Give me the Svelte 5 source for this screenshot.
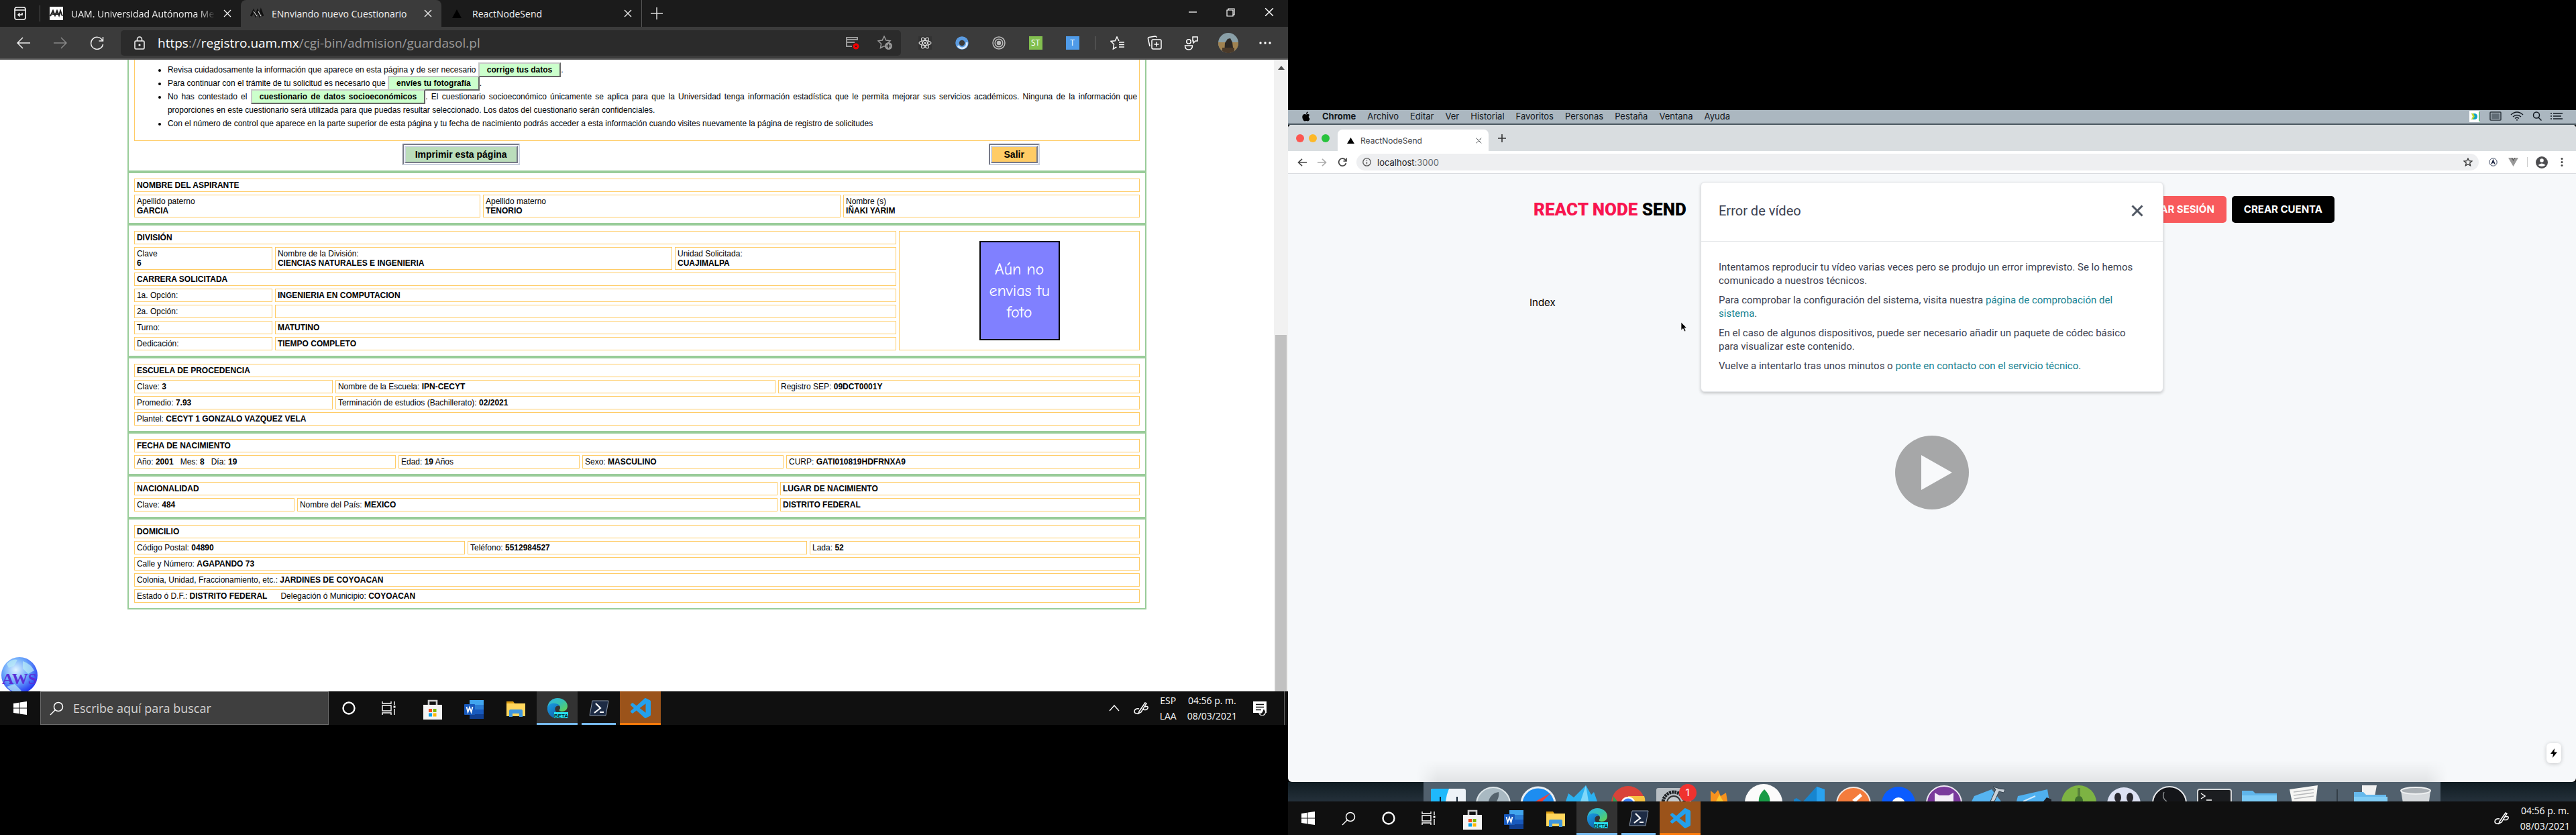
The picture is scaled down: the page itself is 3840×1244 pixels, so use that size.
<script>
  const macMenus = ['Archivo', 'Editar', 'Ver', 'Historial', 'Favoritos', 'Personas', 'Pestaña', 'Ventana', 'Ayuda'];
  const share = (list) => {
    const total = list.reduce((a, b) => a + b, 0);
    return list.map((w) => (w / total) * 100);
  };
  const dockMain = ['finder', 'rocket', 'safari', 'arrows', 'chrome', 'gear', 'fire', 'mongo', 'code', 'postman', 'drop', 'github', 'xcode', 'simulator', 'android', 'skull', 'obs', 'term', 'folder', 'notes'];
  const dockEnd = ['docs', 'trash'];
</script>

{#snippet cols(list)}
  <colgroup>
    {#each share(list) as w}<col style="width: {w}%" />{/each}
  </colgroup>
{/snippet}

{#snippet cross(size)}
  <svg width={size} height={size} viewBox="0 0 12 12" aria-hidden="true"><path d="M1 1 11 11M11 1 1 11" fill="none" stroke="currentColor" stroke-width="1.3" /></svg>
{/snippet}

{#snippet pen()}
  <svg width="24" height="24" viewBox="0 0 24 24" fill="none" stroke="#fff" stroke-width="1.5" aria-hidden="true"><path d="M9 17 18 4l2 1-8 13-4 2zM9 13c-4-1-7 1-7 4s4 4 7 2M15 14c3 1 6 1 7-2s-2-3-4-2" /></svg>
{/snippet}

{#snippet systemButtons()}
  <button class="sys" aria-label="Cortana"><svg width="22" height="22" viewBox="0 0 22 22"><circle cx="11" cy="11" r="8.5" fill="none" stroke="#fff" stroke-width="2.4" /></svg></button>
  <button class="sys" aria-label="Vista de tareas"><svg width="22" height="20" viewBox="0 0 22 20" fill="none" stroke="#fff" stroke-width="1.4"><path d="M1 0v3h13V0M1 20v-3h13v3M1 6h13v8H1zM19 0v5M19 11v9" /><path d="M17.500 6.500h3v3h-3z" fill="#fff" stroke="none" /></svg></button>
{/snippet}

{#snippet apps()}
  <div class="apps">
    <button class="app" aria-label="Microsoft Store">
      <svg width="30" height="30" viewBox="0 0 30 30"><path d="M9 9V2h12v7" fill="none" stroke="#ccc" stroke-width="2.6" /><path d="M1 8h28v22H1z" fill="#f4f4f4" /><path d="M9 14h5v5H9z" fill="#f25022" /><path d="M15.500 14h5v5h-5z" fill="#7fba00" /><path d="M9 20.500h5v5H9z" fill="#00a4ef" /><path d="M15.500 20.500h5v5h-5z" fill="#ffb900" /></svg>
    </button>
    <button class="app" aria-label="Word">
      <svg width="30" height="28" viewBox="0 0 30 28"><path d="M8 0h21v8H8z" fill="#41a5ee" /><path d="M8 7h21v7H8z" fill="#2b7cd3" /><path d="M8 14h21v7H8z" fill="#185abd" /><path d="M8 21h21v7H8z" fill="#103f91" /><rect x="0" y="6" width="16" height="16" rx="1" fill="#185abd" /><path d="m3.500 10 2 8 2.500-7 2.500 7 2-8" fill="none" stroke="#fff" stroke-width="1.800" /></svg>
    </button>
    <button class="app" aria-label="Explorador de archivos">
      <svg width="30" height="26" viewBox="0 0 30 26"><path d="M1 1h10l3 4H1z" fill="#d99a10" /><path d="M1 4h28v19H1z" fill="#ffd65c" /><path d="M5 24v-9q0-2 2-2h16q2 0 2 2v9h-5v-5H10v5z" fill="#3f97de" /></svg>
    </button>
    <button class="app open edge" aria-label="Microsoft Edge Beta">
      <svg width="32" height="32" viewBox="0 0 32 32">
        <defs>
          <linearGradient id="eg" x1="0" y1="0" x2="1" y2="1"><stop offset="0" stop-color="#2fb4e9" /><stop offset=".5" stop-color="#35c1b1" /><stop offset="1" stop-color="#66d54a" /></linearGradient>
          <linearGradient id="eb" x1="0" y1="0" x2="1" y2="1"><stop offset="0" stop-color="#1b9de2" /><stop offset="1" stop-color="#0c4f9c" /></linearGradient>
        </defs>
        <path d="M1 15C2 6 9 1 16 1c9 0 15 6 15 12 0 5-4 8-8 8-3 0-5-1-4-3 1-1 1-2 1-3 0-3-3-5-7-5-6 0-11 4-12 5z" fill="url(#eg)" />
        <path d="M1 15c1-4 6-7 11-6 3 0 6 1 7 4-5-2-8 3-6 7 2 5 9 7 14 4-2 4-7 7-12 7C6 31 0 23 1 15z" fill="url(#eb)" />
        <rect x="11" y="22" width="21" height="9" fill="#29e0ee" /><text x="21.500" y="29.500" class="beta">BETA</text>
      </svg>
    </button>
    <button class="app open ps" aria-label="PowerShell">
      <svg width="30" height="24" viewBox="0 0 30 24"><path d="M5 1h24l-4 22H1z" fill="#1d2b44" stroke="#8b98ab" stroke-width="1" /><path d="m10 5 7 7-9 7M16 18h6" fill="none" stroke="#fff" stroke-width="2.200" /></svg>
    </button>
    <button class="app open code" aria-label="Visual Studio Code">
      <svg width="30" height="30" viewBox="0 0 24 24"><path fill="#23a0ec" d="M23.150 2.587L18.210.210a1.494 1.494 0 0 0-1.705.290l-9.460 8.630-4.120-3.128a.999.999 0 0 0-1.276.057L.327 7.261A1 1 0 0 0 .326 8.740L3.899 12 .326 15.260a1 1 0 0 0 .001 1.479L1.650 17.940a.999.999 0 0 0 1.276.057l4.120-3.128 9.460 8.630a1.492 1.492 0 0 0 1.704.290l4.942-2.377A1.500 1.500 0 0 0 24 20.060V3.939a1.500 1.500 0 0 0-.850-1.352zm-5.146 14.861L10.826 12l7.178-5.448v10.896z" /></svg>
    </button>
  </div>
{/snippet}

{#snippet start()}
  <button class="sys" aria-label="Inicio"><svg width="20" height="20" viewBox="0 0 20 20" fill="#fff"><path d="M0 3 8.500 1.800v7.700H0zM9.500 1.600 20 0v9.500H9.500zM0 10.500h8.500v7.700L0 17zM9.500 10.500H20V20L9.500 18.400z" /></svg></button>
{/snippet}

{#snippet lens()}
  <svg width="21" height="21" viewBox="0 0 21 21" fill="none" stroke="#fff" stroke-width="1.500" aria-hidden="true"><circle cx="13" cy="8" r="6.500" /><path d="M8.500 12.500 1 20" /></svg>
{/snippet}

{#snippet dockIcon(name)}
  <svg class="dock-icon" viewBox="0 0 52 22" aria-hidden="true">
    {#if name === 'finder'}
      <rect x="0" y="3" width="52" height="30" rx="3" fill="#eef3f8" /><path d="M0 6q0-3 3-3h24q-4 9-5 19H0z" fill="#1fb9fb" /><path d="M14 15v7M39 15v7" stroke="#123" stroke-width="2" />
    {:else if name === 'rocket'}
      <circle cx="26" cy="26" r="25" fill="#a9b9c2" stroke="#dfe7ea" stroke-width="2" /><path d="M34 8c-9 1-14 8-15 14h12c2-4 4-8 3-14z" fill="#55636d" />
    {:else if name === 'safari'}
      <circle cx="26" cy="26" r="25" fill="#1d8df0" stroke="#e9eef2" stroke-width="3" /><path d="M45 9 22 22h10z" fill="#f0443c" />
    {:else if name === 'arrows'}
      <path d="M0 22 4 10l8 6L30-2l8 14 4-4 5 14z" fill="#2cb1f0" /><path d="M30-2 22 22h12z" fill="#7fd8fa" />
    {:else if name === 'chrome'}
      <circle cx="26" cy="24" r="25" fill="#d9433a" /><path d="M26 14h24q2 5 1 12H26z" fill="#f6c343" /><path d="M4 14 16 30H2z" fill="#2f9e57" /><circle cx="26" cy="26" r="11" fill="#fff" /><circle cx="26" cy="26" r="8.500" fill="#3f83f8" />
    {:else if name === 'gear'}
      <rect x="0" y="2" width="52" height="30" rx="3" fill="#b9bfc4" /><circle cx="26" cy="24" r="16" fill="none" stroke="#1f2225" stroke-width="5" stroke-dasharray="3 1" /><circle cx="26" cy="24" r="10" fill="#c7cbce" stroke="#333" stroke-width="2" />
    {:else if name === 'fire'}
      <path d="M14 22V6l6 5 5-6 4 9 8-5 2 13z" fill="#f7921e" /><path d="M22 22l5-10 6 10z" fill="#fcc833" />
    {:else if name === 'mongo'}
      <circle cx="26" cy="24" r="28" fill="#fbfbfb" /><path d="M27 4c8 8 9 14 8 20H19c-1-7 1-13 8-20z" fill="#199b47" />
    {:else if name === 'code'}
      <path d="M4 22v-3l4-2 8 5zM18 22 38 0l12 4v18z" fill="#1785cf" /><path d="M38 0l12 4v18H38z" fill="#2aa2ee" />
    {:else if name === 'postman'}
      <circle cx="26" cy="26" r="25" fill="#f47c3c" stroke="#f6e9e1" stroke-width="2" /><path d="M24 20 36 10l3 4-10 9z" fill="#fff" />
    {:else if name === 'drop'}
      <circle cx="26" cy="25" r="25" fill="#0a5cff" /><circle cx="26" cy="26" r="10" fill="#fff" />
    {:else if name === 'github'}
      <circle cx="26" cy="25" r="26" fill="#7a3a9c" stroke="#efe9f3" stroke-width="2" /><path d="M12 22V9l7 4h14l7-4v13z" fill="#f4eef8" />
    {:else if name === 'xcode'}
      <path d="M4 14 30 4l14 18H0z" fill="#56b4f1" /><path d="M32 0l10 3 8 1-2 5-7-2-7 15h-6l8-18z" fill="#c9d1d8" stroke="#31404d" stroke-width="1" />
    {:else if name === 'simulator'}
      <path d="M2 14 46 4l3 18H0z" fill="#4fb0ef" /><path d="M10 22 28 14" stroke="#cfeafd" stroke-width="2" /><path d="M40 22l5-6 7 3v3z" fill="#1a1f26" />
    {:else if name === 'android'}
      <circle cx="26" cy="24" r="26" fill="#7db343" /><path d="M20 22q0-8 6-8t6 8z" fill="#3f6e2f" /><path d="M24 2h4v12h-4z" fill="#577f39" />
    {:else if name === 'skull'}
      <circle cx="26" cy="26" r="25" fill="#dde2f4" /><ellipse cx="17" cy="16" rx="5" ry="7" fill="#28282f" /><ellipse cx="35" cy="16" rx="5" ry="7" fill="#28282f" />
    {:else if name === 'obs'}
      <circle cx="26" cy="25" r="25" fill="#141519" stroke="#e7e9ec" stroke-width="2" /><path d="M18 8q-4 9 4 14" fill="none" stroke="#8a8d90" stroke-width="1.500" />
    {:else if name === 'term'}
      <rect x="1" y="4" width="50" height="30" rx="3" fill="#1b1d20" stroke="#d3d6d8" stroke-width="2" /><path d="m6 10 6 4-6 4M14 20h8" fill="none" stroke="#fff" stroke-width="1.500" />
    {:else if name === 'folder'}
      <path d="M0 6h16l4 4h32v20H0z" fill="#5fb5ea" /><path d="M0 13h52v12H0z" fill="#7ccbf6" />
    {:else if name === 'notes'}
      <path d="M4 4 46-2l-3 26H8z" fill="#f6f6f4" /><path d="M10 8 40 4M10 13 40 9M11 18 40 14" stroke="#b7b9bb" stroke-width="1.500" />
    {:else if name === 'docs'}
      <path d="M14-2h22l-3 16H14z" fill="#f1f1f1" /><path d="M2 8h14l4 4h30v20H2z" fill="#66b9ec" /><path d="M2 15h50v12H2z" fill="#82cdf5" />
    {:else if name === 'trash'}
      <path d="M4 6h44l-3 24H8z" fill="#d5d9dc" /><ellipse cx="26" cy="6" rx="22" ry="5" fill="#a9afb4" stroke="#eef0f1" stroke-width="2" />
    {/if}
  </svg>
{/snippet}

<main class="screens">
  <section class="monitor left" aria-label="Pantalla izquierda">
    <header class="edge-window">
      <div class="tabs">
        <button class="side" aria-label="Pestañas"><svg width="20" height="20" viewBox="0 0 20 20" fill="none" stroke="#fff" stroke-width="1.600"><rect x="2" y="1" width="16" height="18" rx="3" /><path d="M2 5h16M13 9v3H7m2.500-2.500L7 12l2.500 2.500" /></svg></button>
        <div class="tab first">
          <svg width="20" height="20" viewBox="0 0 20 20" aria-hidden="true"><path d="M0 0h20v20H0z" fill="#fff" /><path d="M1 14 5 6l3 7 3-7 3 7 2-7 3 8M4 11h12" fill="none" stroke="#222" stroke-width="2" /></svg>
          <span class="tab-title fade">UAM. Universidad Autónoma Me</span>
          <button class="x" aria-label="Cerrar pestaña">{@render cross(12)}</button>
        </div>
        <div class="tab active">
          <svg width="20" height="20" viewBox="0 0 20 20" aria-hidden="true"><path d="M1 14 5 6l3 7 3-7 3 7 2-7 3 8" fill="none" stroke="#111" stroke-width="3" /><path d="m5 7 5 7M12 7l4 7" stroke="#ddd" stroke-width="1.200" /></svg>
          <span class="tab-title">ENnviando nuevo Cuestionario</span>
          <button class="x" aria-label="Cerrar pestaña">{@render cross(12)}</button>
        </div>
        <div class="tab third">
          <svg width="20" height="20" viewBox="0 0 20 20" aria-hidden="true"><path d="M9 4 16 17H2z" fill="#000" /></svg>
          <span class="tab-title">ReactNodeSend</span>
          <button class="x" aria-label="Cerrar pestaña">{@render cross(12)}</button>
        </div>
        <button class="plus" aria-label="Nueva pestaña"><svg width="18" height="18" viewBox="0 0 18 18"><path d="M9 0v18M0 9h18" stroke="#ddd" stroke-width="1.500" /></svg></button>
        <div class="win">
          <button aria-label="Minimizar"><svg width="12" height="12" viewBox="0 0 12 12"><path d="M0 6h12" stroke="#fff" stroke-width="1.300" /></svg></button>
          <button aria-label="Restaurar"><svg width="13" height="13" viewBox="0 0 13 13" fill="none" stroke="#fff" stroke-width="1.200"><path d="M1 3h9v9H1zM3 3V1h9v9h-2" /></svg></button>
          <button aria-label="Cerrar">{@render cross(14)}</button>
        </div>
      </div>
      <div class="toolbar">
        <button class="tool" aria-label="Atrás"><svg width="20" height="18" viewBox="0 0 20 18" fill="none" stroke="#eee" stroke-width="1.500"><path d="M20 9H1M9 1 1 9l8 8" /></svg></button>
        <button class="tool" aria-label="Adelante"><svg width="20" height="18" viewBox="0 0 20 18" fill="none" stroke="#888" stroke-width="1.500"><path d="M0 9h19M11 1l8 8-8 8" /></svg></button>
        <button class="tool" aria-label="Actualizar"><svg width="21" height="20" viewBox="0 0 21 20" fill="none" stroke="#eee" stroke-width="1.500"><path d="M19 7A9 9 0 1 0 19.500 12M19.500 1v6h-6" /></svg></button>
        <div class="address">
          <svg width="18" height="20" viewBox="0 0 18 20" fill="none" stroke="#eee" stroke-width="1.600" aria-hidden="true"><rect x="2" y="7" width="14" height="12" rx="1.500" /><path d="M5.500 7V4.500a3.500 3.500 0 0 1 7 0V7" /><circle cx="9" cy="13" r=".8" fill="#eee" /></svg>
          <div class="url" role="textbox" tabindex="0" contenteditable="true" aria-label="Dirección"><b>https</b>://<b>registro.uam.mx</b>/cgi-bin/admision/guardasol.pl</div>
          <button class="in" aria-label="Contenido bloqueado"><svg width="20" height="20" viewBox="0 0 20 20"><path d="M1 2h16v3H1zM1 5v10h8M1 9h12" fill="none" stroke="#999" stroke-width="2" /><circle cx="15" cy="15" r="4.500" fill="#f00" /><path d="m13.500 13.500 3 3m0-3-3 3" stroke="#222" stroke-width="1" /></svg></button>
          <button class="in" aria-label="Agregar a favoritos"><svg width="23" height="22" viewBox="0 0 23 22"><path d="m10 1 2.800 6 6.200.8-4.600 4.400 1.100 6.300L10 15.600l-5.500 2.900 1.100-6.300L1 7.800 7.200 7z" fill="none" stroke="#999" stroke-width="1.500" /><circle cx="16.500" cy="15.500" r="5.500" fill="#999" /><path d="M16.500 12.500v6M13.500 15.500h6" stroke="#2b2b2b" stroke-width="1.300" /></svg></button>
        </div>
        <button class="tool" aria-label="React"><svg width="20" height="20" viewBox="0 0 20 20"><path d="M0 0h20v20H0z" fill="#333" /><g fill="none" stroke="#ddd" stroke-width="1.200"><ellipse cx="10" cy="10" rx="9" ry="3.500" /><ellipse cx="10" cy="10" rx="9" ry="3.500" transform="rotate(60 10 10)" /><ellipse cx="10" cy="10" rx="9" ry="3.500" transform="rotate(120 10 10)" /></g><circle cx="10" cy="10" r="1.500" fill="#ddd" /></svg></button>
        <button class="tool" aria-label="Extensión de descargas"><svg width="20" height="20" viewBox="0 0 20 20"><circle cx="10" cy="10" r="7" fill="none" stroke="#5b9be0" stroke-width="5.500" /><path d="M4 14a7 7 0 0 0 13-5" fill="none" stroke="#d7e9fb" stroke-width="3" /></svg></button>
        <button class="tool" aria-label="Tor"><svg width="20" height="20" viewBox="0 0 20 20" fill="none" stroke="#bbb" stroke-width="1.500"><circle cx="10" cy="10" r="9" /><circle cx="10" cy="10" r="5.800" /><circle cx="10" cy="10" r="2.500" fill="#bbb" /></svg></button>
        <button class="tool"><span class="chip green">ST</span></button>
        <button class="tool"><span class="chip blue">T</span></button>
        <span class="rule"></span>
        <button class="tool" aria-label="Favoritos"><svg width="22" height="20" viewBox="0 0 22 20" fill="none" stroke="#fff" stroke-width="1.500"><path d="M13 7 10 1 7.300 6.800 1 7.500l4.500 4.500L4.400 19l5-3M13 9h8M13 12.500h8M13 16h8" /></svg></button>
        <button class="tool" aria-label="Colecciones"><svg width="22" height="22" viewBox="0 0 22 22" fill="none" stroke="#fff" stroke-width="1.500"><rect x="7" y="6" width="14" height="14" rx="2" /><path d="M14 9.500v7M10.500 13h7M4 16 1.500 5Q1 3 3 2.500L12 1q2 0 2.500 2" /></svg></button>
        <button class="tool" aria-label="Comentarios"><svg width="22" height="22" viewBox="0 0 22 22" fill="none" stroke="#fff" stroke-width="1.500"><circle cx="7" cy="9" r="3.200" /><path d="M1.500 15h11q0 6-5.500 6t-5.500-6zM13 2h7v6h-3l-3 3V8h-1z" /></svg></button>
        <button class="tool" aria-label="Perfil"><svg width="30" height="30" viewBox="0 0 30 30"><defs><clipPath id="av"><circle cx="15" cy="15" r="15" /></clipPath></defs><g clip-path="url(#av)"><path d="M0 0h30v30H0z" fill="#8aa0a8" /><path d="M0 14h30v16H0z" fill="#a08250" /><path d="M9 30 10 15l4-6 4-1 3 6 2 16z" fill="#2c2824" /><path d="M6 22h18v8H6z" fill="#4a3a2a" /></g></svg></button>
        <button class="tool" aria-label="Más"><svg width="18" height="4" viewBox="0 0 18 4" fill="#fff"><circle cx="2" cy="2" r="1.700" /><circle cx="9" cy="2" r="1.700" /><circle cx="16" cy="2" r="1.700" /></svg></button>
      </div>
    </header>

    <div class="page-row">
      <article class="page">
        <div class="form">
          <div class="group top">
            <div class="notice">
              <ul>
                <li>Revisa cuidadosamente la información que aparece en esta página y de ser necesario <a href="#corrige">corrige tus datos</a>.</li>
                <li>Para continuar con el trámite de tu solicitud es necesario que <a href="#foto">envíes tu fotografía</a>.</li>
                <li>No has contestado el <a href="#cuestionario">cuestionario de datos socioeconómicos</a>. El cuestionario socioeconómico únicamente se aplica para que la Universidad tenga información estadística que le permita mejorar sus servicios académicos. Ninguna de la información que proporciones en este cuestionario será utilizada para que puedas resultar seleccionado. Los datos del cuestionario serán confidenciales.</li>
                <li>Con el número de control que aparece en la parte superior de esta página y tu fecha de nacimiento podrás acceder a esta información cuando visites nuevamente la página de registro de solicitudes</li>
              </ul>
            </div>
            <div class="actions">
              <div class="act wide"><button class="groove print"><span>Imprimir esta página</span></button></div>
              <div class="act"><button class="groove exit"><span>Salir</span></button></div>
            </div>
          </div>

          <div class="group">
            <table>
              {@render cols([516, 533, 442])}
              <tbody>
                <tr><th colspan="3">NOMBRE DEL ASPIRANTE</th></tr>
                <tr>
                  <td>Apellido paterno<br /><b>GARCIA</b></td>
                  <td>Apellido materno<br /><b>TENORIO</b></td>
                  <td>Nombre (s)<br /><b>IÑAKI YARIM</b></td>
                </tr>
              </tbody>
            </table>
          </div>

          <div class="group">
            <table>
              {@render cols([206, 592, 330, 359])}
              <tbody>
                <tr>
                  <th colspan="3">DIVISIÓN</th>
                  <td rowspan="7" class="photo-cell"><div class="photo">Aún no envias tu foto</div></td>
                </tr>
                <tr>
                  <td>Clave<br /><b>6</b></td>
                  <td>Nombre de la División:<br /><b>CIENCIAS NATURALES E INGENIERIA</b></td>
                  <td>Unidad Solicitada:<br /><b>CUAJIMALPA</b></td>
                </tr>
                <tr><th colspan="3">CARRERA SOLICITADA</th></tr>
                <tr><td>1a. Opción:</td><td colspan="2"><b>INGENIERIA EN COMPUTACION</b></td></tr>
                <tr><td>2a. Opción:</td><td colspan="2"></td></tr>
                <tr><td>Turno:</td><td colspan="2"><b>MATUTINO</b></td></tr>
                <tr><td>Dedicación:</td><td colspan="2"><b>TIEMPO COMPLETO</b></td></tr>
              </tbody>
            </table>
          </div>

          <div class="group">
            <table>
              {@render cols([296, 656, 539])}
              <tbody>
                <tr><th colspan="3">ESCUELA DE PROCEDENCIA</th></tr>
                <tr>
                  <td>Clave: <b>3</b></td>
                  <td>Nombre de la Escuela: <b>IPN-CECYT</b></td>
                  <td>Registro SEP: <b>09DCT0001Y</b></td>
                </tr>
                <tr><td>Promedio: <b>7.93</b></td><td colspan="2">Terminación de estudios (Bachillerato): <b>02/2021</b></td></tr>
                <tr><td colspan="3">Plantel: <b>CECYT 1 GONZALO VAZQUEZ VELA</b></td></tr>
              </tbody>
            </table>
          </div>

          <div class="group">
            <table>
              {@render cols([390, 270, 300, 527])}
              <tbody>
                <tr><th colspan="4">FECHA DE NACIMIENTO</th></tr>
                <tr>
                  <td>Año: <b>2001</b>&nbsp;&nbsp; Mes: <b>8</b>&nbsp;&nbsp; Día: <b>19</b></td>
                  <td>Edad: <b>19</b> Años</td>
                  <td>Sexo: <b>MASCULINO</b></td>
                  <td>CURP: <b>GATI010819HDFRNXA9</b></td>
                </tr>
              </tbody>
            </table>
          </div>

          <div class="group">
            <table>
              {@render cols([239, 716, 536])}
              <tbody>
                <tr><th colspan="2">NACIONALIDAD</th><th>LUGAR DE NACIMIENTO</th></tr>
                <tr>
                  <td>Clave: <b>484</b></td>
                  <td>Nombre del País: <b>MEXICO</b></td>
                  <td><b>DISTRITO FEDERAL</b></td>
                </tr>
              </tbody>
            </table>
          </div>

          <div class="group">
            <table>
              {@render cols([493, 506, 492])}
              <tbody>
                <tr><th colspan="3">DOMICILIO</th></tr>
                <tr>
                  <td>Código Postal: <b>04890</b></td>
                  <td>Teléfono: <b>5512984527</b></td>
                  <td>Lada: <b>52</b></td>
                </tr>
                <tr><td colspan="3">Calle y Número: <b>AGAPANDO 73</b></td></tr>
                <tr><td colspan="3">Colonia, Unidad, Fraccionamiento, etc.: <b>JARDINES DE COYOACAN</b></td></tr>
                <tr><td colspan="3">Estado ó D.F.: <b>DISTRITO FEDERAL</b>&nbsp;&nbsp;&nbsp;&nbsp;&nbsp; Delegación ó Municipio: <b>COYOACAN</b></td></tr>
              </tbody>
            </table>
          </div>
        </div>
        <div class="globe">
          <svg width="58" height="58" viewBox="0 0 58 58" aria-hidden="true">
            <defs><radialGradient id="gl" cx=".4" cy=".35" r=".7"><stop offset="0" stop-color="#dff4ff" /><stop offset=".5" stop-color="#6ba8fb" /><stop offset="1" stop-color="#1c2bf0" /></radialGradient></defs>
            <circle cx="29" cy="27" r="27" fill="url(#gl)" /><path d="M10 10q8-8 16-6l-5 9-8 3zM34 6q12 4 17 14l-9 5-8-8zM10 44l12-4 10 10-6 4q-10-3-16-10z" fill="#b9ecf7" opacity=".7" />
            <text x="29" y="40" class="aws" text-anchor="middle">AWS</text>
          </svg>
        </div>
      </article>
      <div class="scrollbar" aria-hidden="true">
        <svg width="10" height="6" viewBox="0 0 10 6"><path d="M0 6 5 0l5 6z" fill="#505050" /></svg>
        <span class="thumb"></span>
      </div>
    </div>

    <footer class="taskbar">
      {@render start()}
      <label class="search">{@render lens()}<input type="text" placeholder="Escribe aquí para buscar" aria-label="Buscar" /></label>
      {@render systemButtons()}
      {@render apps()}
      <div class="tray">
        <svg width="16" height="10" viewBox="0 0 16 10" aria-hidden="true"><path d="m1 9 7-8 7 8" fill="none" stroke="#fff" stroke-width="1.400" /></svg>
        {@render pen()}
        <div class="stack lang"><span>ESP</span><span>LAA</span></div>
        <div class="stack"><span>04:56 p. m.</span><span>08/03/2021</span></div>
        <button class="notes" aria-label="Notificaciones"><svg width="21" height="21" viewBox="0 0 21 21"><path d="M0 0h20v17H11l-4 0H0z" fill="#fff" /><path d="M4 4.500h12M4 8.500h12M4 12.500h8" stroke="#101010" stroke-width="1.400" /><path d="M15 11a5 5 0 1 1-6 7q5 0 6-7z" fill="#101010" stroke="#fff" stroke-width="1.200" /></svg></button>
      </div>
    </footer>
  </section>

  <section class="monitor right" aria-label="Pantalla derecha">
    <nav class="menubar">
      <svg width="14" height="15" viewBox="0 0 24 24" aria-label="Apple" role="img"><path d="M12.152 6.896c-.948 0-2.415-1.078-3.960-1.040-2.040.027-3.910 1.183-4.961 3.014-2.117 3.675-.546 9.103 1.519 12.090 1.013 1.454 2.208 3.090 3.792 3.039 1.520-.065 2.090-.987 3.935-.987 1.831 0 2.350.987 3.960.948 1.637-.026 2.676-1.480 3.676-2.948 1.156-1.688 1.636-3.325 1.662-3.415-.039-.013-3.182-1.221-3.220-4.857-.026-3.040 2.480-4.494 2.597-4.559-1.429-2.090-3.623-2.324-4.390-2.376-2-.156-3.675 1.090-4.610 1.090zM15.530 3.830c.843-1.012 1.400-2.427 1.245-3.830-1.207.052-2.662.805-3.532 1.818-.780.896-1.454 2.338-1.273 3.714 1.338.104 2.715-.688 3.559-1.701" /></svg>
      <strong>Chrome</strong>
      {#each macMenus as item}<span>{item}</span>{/each}
      <div class="status" aria-hidden="true">
        <svg width="17" height="17" viewBox="0 0 17 17"><path d="M0 0h16v17H0z" fill="#fff" /><path d="M3 4h4q5 0 5 4.500T7 13H3l3-4.500z" fill="#12a5c9" /><path d="M3 4h3l2 4.500L5 13H3l2-4.500z" fill="#c6d92c" /><path d="M14 1h2v15h-2z" fill="#6dbb8b" /></svg>
        <svg width="18" height="14" viewBox="0 0 18 14"><rect x="1" y="1" width="16" height="12" rx="1" fill="#abb7c0" stroke="#2d363d" stroke-width="1.500" /><path d="M3 3h12v8H3z" fill="#5f6b74" /></svg>
        <svg width="20" height="14" viewBox="0 0 20 14" fill="none" stroke="#111820" stroke-width="1.600"><path d="M1 5q9-8 18 0M4 8q6-5 12 0M7 10.500q3-2.500 6 0" /><circle cx="10" cy="12.800" r="1" fill="#111820" stroke="none" /></svg>
        <svg width="14" height="14" viewBox="0 0 14 14" fill="none" stroke="#111820" stroke-width="1.500"><circle cx="6" cy="5.500" r="4.500" /><path d="m9 9 4.500 4.500" /></svg>
        <svg width="18" height="12" viewBox="0 0 18 12" stroke="#111820" stroke-width="1.700"><path d="M0 2h2M4 2h14M0 6h2M4 6h12M0 10h2M4 10h14" /></svg>
      </div>
    </nav>

    <div class="chrome">
      <div class="c-tabs">
        <span class="light r"></span><span class="light y"></span><span class="light g"></span>
        <div class="c-tab">
          <svg width="11" height="9" viewBox="0 0 11 9" aria-hidden="true"><path d="M5.500 0 11 9H0z" /></svg>
          <span>ReactNodeSend</span>
          <button aria-label="Cerrar pestaña">{@render cross(9)}</button>
        </div>
        <button class="c-plus" aria-label="Nueva pestaña"><svg width="12" height="12" viewBox="0 0 12 12"><path d="M6 0v12M0 6h12" stroke="#333" stroke-width="1.600" /></svg></button>
      </div>
      <div class="c-bar">
        <button class="c-ico" aria-label="Atrás"><svg width="14" height="12" viewBox="0 0 14 12" fill="none" stroke="#444" stroke-width="1.600"><path d="M14 6H1.500M7 .8 1.500 6 7 11.200" /></svg></button>
        <button class="c-ico" aria-label="Adelante"><svg width="14" height="12" viewBox="0 0 14 12" fill="none" stroke="#aaa" stroke-width="1.600"><path d="M0 6h12.500M7 .8 12.500 6 7 11.200" /></svg></button>
        <button class="c-ico" aria-label="Recargar"><svg width="14" height="13" viewBox="0 0 14 13" fill="none" stroke="#444" stroke-width="1.700"><path d="M12 4A5.500 5.500 0 1 0 12.500 8M13 .5v4.500H8.500" /></svg></button>
        <div class="omni">
          <svg width="13" height="13" viewBox="0 0 13 13" fill="none" stroke="#555" stroke-width="1.300" aria-hidden="true"><circle cx="6.500" cy="6.500" r="5.700" /><path d="M6.500 6v3.500M6.500 3.300v1.400" /></svg>
          <div class="host" role="textbox" tabindex="0" contenteditable="true" aria-label="Dirección web"><b>localhost</b>:3000</div>
          <button class="star" aria-label="Marcador"><svg width="14" height="13" viewBox="0 0 14 13"><path d="m7 1 1.700 3.700 4.100.4-3.100 2.700.9 4L7 9.700l-3.600 2.100.9-4L1.200 5.100l4.100-.4z" fill="none" stroke="#333" stroke-width="1.300" /></svg></button>
        </div>
        <button class="c-ico" aria-label="Extensión A"><svg width="13" height="13" viewBox="0 0 13 13"><circle cx="6.500" cy="6.500" r="5.700" fill="none" stroke="#3b4660" /><path d="M4 9.500 6.500 3.500 9 9.500M5 7.500h3" fill="none" stroke="#1b2440" stroke-width="1.400" /></svg></button>
        <button class="c-ico" aria-label="Vue"><svg width="15" height="13" viewBox="0 0 15 13"><path d="M0 0h4l3.500 6L11 0h4L7.500 13z" fill="#999" /><path d="M4 0h2.500l1 2 1-2H11L7.500 6z" fill="#666" /></svg></button>
        <span class="c-rule"></span>
        <button class="c-ico" aria-label="Usuario"><svg width="18" height="18" viewBox="0 0 18 18"><circle cx="9" cy="9" r="9" fill="#4d4d50" /><circle cx="9" cy="6" r="2.800" fill="#fff" /><path d="M3.500 13q5.500-5 11 0-5.500 4-11 0z" fill="#fff" /></svg></button>
        <button class="c-ico" aria-label="Menú"><svg width="4" height="13" viewBox="0 0 4 13" fill="#444"><circle cx="2" cy="1.500" r="1.500" /><circle cx="2" cy="6.500" r="1.500" /><circle cx="2" cy="11.500" r="1.500" /></svg></button>
      </div>
      <div class="content">
        <div class="wrap">
          <header class="brand-row">
            <h1><span>REACT NODE</span> SEND</h1>
            <div class="auth">
              <a class="btn red" href="#login">INICIAR SESIÓN</a>
              <a class="btn black" href="#signup">CREAR CUENTA</a>
            </div>
          </header>
          <p class="index">Index</p>
        </div>

        <div class="modal" role="dialog" aria-label="Error de vídeo">
          <div class="m-head">
            <h2>Error de vídeo</h2>
            <button aria-label="Cerrar"><svg width="18" height="18" viewBox="0 0 18 18"><path d="m1.500 1.500 15 15m0-15-15 15" stroke="#505763" stroke-width="3" /></svg></button>
          </div>
          <div class="m-body">
            <p>Intentamos reproducir tu vídeo varias veces pero se produjo un error imprevisto. Se lo hemos comunicado a nuestros técnicos.</p>
            <p>Para comprobar la configuración del sistema, visita nuestra <a href="#check">página de comprobación del sistema</a>.</p>
            <p>En el caso de algunos dispositivos, puede ser necesario añadir un paquete de códec básico para visualizar este contenido.</p>
            <p>Vuelve a intentarlo tras unos minutos o <a href="#support">ponte en contacto con el servicio técnico</a>.</p>
          </div>
        </div>

        <button class="play" aria-label="Reproducir"><svg width="112" height="112" viewBox="0 0 112 112"><circle cx="56" cy="56" r="55" fill="#a6a7a8" /><path d="M40 30 86 56 40 82z" fill="#f8f9fb" /></svg></button>
        <svg class="cursor" width="10" height="16" viewBox="0 0 10 16" aria-hidden="true"><path d="M1 1v12l3-2.500L6 15l2-1-2-4.500h3.500z" fill="#000" stroke="#fff" stroke-width=".7" /></svg>
        <button class="bolt" aria-label="Actividad"><svg width="10" height="14" viewBox="0 0 10 14"><path d="M6 0 0 8h4l-1 6 7-8.500H5.500z" fill="#000" /></svg></button>
      </div>
    </div>

    <div class="dock-strip">
      <div class="dock">
        <div class="dock-main">
          {#each dockMain as name}
            <span class="slot">{@render dockIcon(name)}{#if name === 'gear'}<span class="badge">1</span>{/if}</span>
          {/each}
        </div>
        <span class="dock-rule"></span>
        <div class="dock-end">{#each dockEnd as name}<span class="slot">{@render dockIcon(name)}</span>{/each}</div>
      </div>
    </div>

    <footer class="taskbar">
      {@render start()}
      <button class="sys" aria-label="Buscar">{@render lens()}</button>
      {@render systemButtons()}
      {@render apps()}
      <div class="tray end">
        {@render pen()}
        <div class="stack"><span>04:56 p. m.</span><span>08/03/2021</span></div>
      </div>
    </footer>
  </section>
</main>

<style>
  :global(body) { margin: 0; background: #000; }
  *, *::before, *::after { box-sizing: border-box; }
  button { border: 0; padding: 0; margin: 0; background: none; color: inherit; font: inherit; display: flex; align-items: center; justify-content: center; flex: none; }
  svg { display: block; flex: none; }
  .screens { display: grid; grid-template-columns: 1fr 1fr; min-height: 100vh; background: #000; }
  .monitor { display: flex; flex-direction: column; min-width: 0; }
  .left { padding-bottom: 164px; font-family: "Open Sans", "Noto Sans", sans-serif; }
  .right { padding-top: 164px; font-family: Inter, "Liberation Sans", sans-serif; }

  /* Edge window */
  .tabs { display: flex; height: 40px; background: #1b1b1b; color: #f2f2f2; font-size: 14px; }
  .side { width: 60px; border-right: 1px solid #555; margin: 8px 0; }
  .tab { width: 299px; display: flex; align-items: center; gap: 12px; padding: 0 14px; }
  .tab.active { background: #3b3b3b; border-radius: 8px 8px 0 0; }
  .tab.third { border-right: 1px solid #555; }
  .tab-title { flex: 1; min-width: 0; white-space: nowrap; overflow: hidden; }
  .fade { mask-image: linear-gradient(90deg, #000 88%, transparent); }
  .plus { width: 44px; }
  .win { margin-left: auto; display: flex; }
  .win button { width: 57px; height: 36px; color: #fff; }
  .toolbar { display: flex; align-items: center; height: 49px; padding: 0 7px; background: #3b3b3b; border-bottom: 2px solid #5c5c5c; }
  .tool { width: 55px; height: 40px; }
  .address { flex: 1; display: flex; align-items: center; height: 38px; margin: 0 8px; padding-left: 19px; background: #2b2b2b; border-radius: 5px; }
  .url { flex: 1; margin-left: 18px; font-size: 19px; line-height: 26px; color: #9a9a9a; white-space: nowrap; outline: none; }
  .url b { font-weight: 400; color: #fff; }
  .in { width: 48px; height: 36px; }
  .chip { width: 20px; height: 20px; line-height: 20px; font-size: 12px; text-align: center; color: #fff; }
  .green { background: #82bf4f; }
  .blue { background: #4f9be8; }
  .rule { width: 1px; height: 20px; margin: 0 5px 0 6px; background: #666; }

  /* Registration page */
  .page-row { flex: 1; display: flex; background: #fff; }
  .page { flex: 1; min-width: 0; display: flex; flex-direction: column; justify-content: space-between; }
  .form { width: 80%; margin: 0 auto; font: 12px/14px "Liberation Sans", Arial, sans-serif; color: #000; }
  .group { border: 2px solid #99cc99; padding: 4px; }
  .group.top { border-top: 0; padding: 0 8px 8px; }
  .notice { border: 1px solid #ffcc66; border-top: 0; padding: 5px 3px 15px 49px; }
  .notice ul { margin: 0; padding: 0; line-height: 20px; text-align: justify; }
  .notice a { padding: 2px 11px; border: 2px solid; border-color: #c8c8c8 #666 #666 #c8c8c8; background: #ccffcc; color: #000; font-weight: 700; text-decoration: none; white-space: nowrap; }
  .actions { display: flex; justify-content: space-between; margin-top: 4px; }
  .act { width: 25%; display: flex; justify-content: center; }
  .act.wide { width: 65%; }
  .groove { border: 2px solid; border-color: #777a88 #ccd2e0 #ccd2e0 #777a88; background: #fff; font-weight: 700; font-size: 14px; padding: 1px; }
  .groove span { display: block; border: 2px solid; border-color: #ccd2e0 #777a88 #777a88 #ccd2e0; padding: 3px 14px; line-height: 16px; }
  .print span { background: #bbddbb; }
  .exit span { background: #ffcc66; padding: 3px 18px; }
  table { width: 100%; table-layout: fixed; border-collapse: separate; border-spacing: 4px; }
  th, td { border: 1px solid #ffcc66; padding: 2px 3px; text-align: left; vertical-align: top; }
  .photo-cell { text-align: center; vertical-align: middle; padding: 0; }
  .photo { width: 120px; height: 148px; margin: 0 auto; padding-top: 24px; border: 2px solid #000; background: #8080ff; color: #fff; font: 24px/32px "Comic Sans MS", "Comic Neue", Lato, sans-serif; }
  .globe { height: 51px; overflow: hidden; }
  .aws { font: 700 24px "Liberation Serif", serif; fill: #5a2fd6; }
  .scrollbar { width: 21px; display: flex; flex-direction: column; align-items: center; justify-content: space-between; padding-top: 9px; background: #f1f1f1; }
  .thumb { width: 17px; height: 57%; background: #c1c1c1; }

  /* Windows taskbar */
  .taskbar { display: flex; height: 50px; background: #101010; color: #fff; font-family: "Open Sans", "Noto Sans", sans-serif; }
  .sys { width: 60px; height: 50px; }
  .search { width: 430px; display: flex; align-items: center; padding-left: 13px; background: #3f3f3f; border: 1px solid #6b6b6b; }
  .search input { flex: 1; min-width: 0; margin-left: 14px; padding: 0; border: 0; outline: 0; background: none; color: #fff; font: 18px/26px "Open Sans", "Noto Sans", sans-serif; }
  .search input::placeholder { color: #d4d4d4; opacity: 1; }
  .apps { display: flex; gap: 1px; margin-left: 4px; }
  .app { width: 61px; height: 50px; border: 0 solid #76b9ed; padding-top: 3px; }
  .open { border-bottom-width: 3px; }
  .edge { background: #333; }
  .code { background: #9b531a; border-color: #ff7a0a; }
  .ps { width: 51px; margin: 0 5px; }
  .beta { font: 700 8px "Liberation Sans", sans-serif; text-anchor: middle; fill: #023; }
  .tray { margin-left: auto; display: flex; align-items: center; gap: 20px; margin-right: 5px; padding-right: 25px; border-right: 1px solid #666; }
  .tray.end { border: 0; padding: 0; margin-right: 9px; gap: 16px; }
  .stack { display: flex; flex-direction: column; align-items: center; font-size: 14px; line-height: 23px; white-space: nowrap; }
  .lang { margin: 0 -4px; }
  .notes { margin-left: 4px; }

  /* macOS desktop */
  .menubar { display: flex; align-items: center; gap: 17px; height: 22px; padding: 0 20px 2px 20px; background: #abb7c0; border-bottom: 2px solid #4b5861; font-size: 13px; line-height: 18px; color: #10161c; }
  .status { margin-left: auto; display: flex; align-items: center; gap: 13px; }
  .chrome { flex: 1; display: flex; flex-direction: column; background: #f6f8fa; border-radius: 5px 5px 6px 6px; overflow: hidden; }
  .c-tabs { display: flex; align-items: center; height: 39px; padding-left: 12px; gap: 7px; background: #d9dde0; }
  .light { width: 12px; height: 12px; border-radius: 50%; }
  .r { background: #fc5650; }
  .y { background: #fdb827; }
  .g { background: #27c23c; }
  .c-tab { display: flex; align-items: center; align-self: flex-end; width: 225px; height: 32px; margin-left: 5px; padding: 0 10px 0 14px; gap: 9px; background: #fff; border-radius: 7px 7px 0 0; font-size: 12px; color: #3f4347; }
  .c-tab span { flex: 1; }
  .c-plus { margin-left: 7px; }
  .c-bar { display: flex; align-items: center; height: 34px; padding: 0 6px; background: #fff; border-bottom: 1px solid #dadce0; }
  .c-ico { width: 30px; height: 26px; }
  .omni { flex: 1; display: flex; align-items: center; height: 25px; margin: 0 6px; padding: 0 9px; gap: 9px; background: #eeeff1; border-radius: 13px; font-size: 13px; }
  .host { flex: 1; color: #666b70; outline: none; }
  .host b { font-weight: 400; color: #202124; }
  .c-rule { width: 1px; height: 15px; margin: 0 6px; background: #ccc; }
  .content { flex: 1; position: relative; overflow: hidden; }
  .wrap { width: 1200px; max-width: 100%; margin: 0 auto; }
  .brand-row { display: flex; align-items: center; justify-content: space-between; padding: 33px 0 0 6px; }
  h1 { margin: 0; font: 900 26px/40px Roboto, sans-serif; color: #000; }
  h1 span { color: #f8154f; }
  .auth { display: flex; gap: 8px; }
  .btn { padding: 0 18px; line-height: 40px; border-radius: 5px; color: #fff; font-size: 15px; font-weight: 700; text-decoration: none; }
  .red { background: #f85a5c; }
  .black { background: #000; }
  .index { margin: 108px 0 0; font-size: 15px; line-height: 22px; color: #000; }
  .modal { position: absolute; top: 12px; left: 50%; width: 690px; margin-left: -345px; background: #fff; border: 1px solid #e3e5e8; border-radius: 6px; box-shadow: 0 2px 4px rgba(0, 0, 0, .2); font-family: Roboto, sans-serif; color: #3c4150; }
  .m-head { display: flex; align-items: center; justify-content: space-between; height: 88px; padding: 0 29px 4px 26px; border-bottom: 1px solid #e3e5e8; }
  h2 { margin: 0; font-size: 20px; line-height: 24px; font-weight: 400; }
  .m-body { padding: 28px 26px; display: grid; gap: 9px; font-size: 15px; line-height: 20px; }
  .m-body p { margin: 0; }
  .m-body a { color: #168292; text-decoration: none; }
  .play { position: absolute; left: 50%; top: 445px; transform: translate(-50%, -50%); }
  .cursor { position: absolute; left: 585px; top: 220px; }
  .bolt { position: absolute; right: 22px; bottom: 28px; width: 22px; height: 30px; border-radius: 6px; background: #fff; box-shadow: 0 1px 6px rgba(0, 0, 0, .2); }
  .dock-strip { position: relative; height: 29px; overflow: visible; background: linear-gradient(#101c22, #24303a); }
  .dock-strip::before { content: ""; position: absolute; left: 10%; right: 10%; bottom: 100%; height: 32px; background: linear-gradient(transparent, rgba(0, 0, 0, .08)); mask-image: linear-gradient(90deg, transparent, #000 2%, #000 98%, transparent); }
  .dock { width: 79%; height: 29px; margin: 0 auto; padding: 7px 11px 0; display: flex; background: #51606d; overflow: hidden; }
  .dock-main { flex: 1; display: flex; justify-content: space-between; }
  .dock-end { display: flex; gap: 16px; }
  .dock-rule { width: 2px; height: 22px; margin: 4px 22px 0; background: #333e48; }
  .slot { position: relative; width: 52px; height: 22px; }
  .dock-icon { width: 52px; height: 22px; overflow: visible; }
  .badge { position: absolute; right: -8px; top: -4px; width: 26px; height: 26px; border-radius: 50%; background: #f0322f; color: #fff; font-size: 15px; line-height: 26px; text-align: center; }
</style>
